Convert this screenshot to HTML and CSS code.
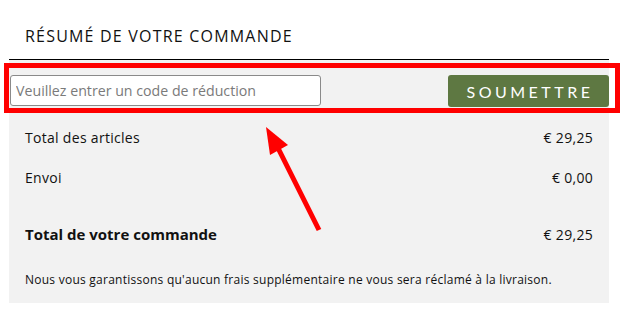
FILE: index.html
```html
<!DOCTYPE html>
<html lang="fr">
<head>
  <meta charset="UTF-8" />
  <title>Résumé de votre commande</title>
  <link rel="stylesheet" href="styles.css">
</head>
<body>
  <div class="summary">
    <h2 class="summary-title">RÉSUMÉ DE VOTRE COMMANDE</h2>

    <div class="summary-body">
      <form class="coupon" onsubmit="return false">
        <input type="text" class="coupon-input" placeholder="Veuillez entrer un code de réduction">
        <button type="submit" class="coupon-btn">SOUMETTRE</button>
      </form>

      <div class="row"><span>Total des articles</span><span>€ 29,25</span></div>
      <div class="row"><span>Envoi</span><span>€ 0,00</span></div>
      <div class="row total"><span>Total de votre commande</span><span class="amount">€ 29,25</span></div>

      <p class="note">Nous vous garantissons qu'aucun frais supplémentaire ne vous sera réclamé à la livraison.</p>
    </div>
  </div>

  <!-- annotation -->
  <div class="highlight"></div>
  <svg class="arrow" width="637" height="313" viewBox="0 0 637 313">
    <line x1="319" y1="230" x2="278" y2="148" stroke="#ff0000" stroke-width="5" />
    <polygon points="266,127 288,145 270,155" fill="#ff0000" />
  </svg>
</body>
</html>
```

FILE: styles.css
```css
* { margin: 0; padding: 0; box-sizing: border-box; }

body {
  background: #fff;
  font-family: "Open Sans", "Lato", sans-serif;
  color: #111;
  position: relative;
  width: 637px;
  height: 313px;
  overflow: hidden;
}

.summary {
  margin-left: 9px;
  width: 600px;
}

.summary-title {
  height: 60px;
  padding: 25px 0 0 16px;
  font-size: 16px;
  font-weight: 400;
  letter-spacing: 1.2px;
  border-bottom: 1px solid #000;
}

.summary-body {
  background: #f2f2f2;
  height: 243px;
  padding: 15px 0 0 0;
}

.coupon {
  display: flex;
  justify-content: space-between;
  padding-left: 1px;
  margin-bottom: 10px;
}

.coupon-input {
  width: 311px;
  height: 31px;
  border: 1px solid #8a8a8a;
  border-radius: 3px;
  background: #fff;
  padding: 0 5px;
  font-family: inherit;
  font-size: 14.2px;
}

.coupon-input::placeholder { color: #7a7a7a; }

.coupon-btn {
  width: 161px;
  height: 32px;
  background: #5e7842;
  color: #fff;
  border: none;
  border-radius: 3px;
  font-family: "Lato", sans-serif;
  font-size: 16px;
  letter-spacing: 3.5px;
  padding-left: 3px;
  cursor: pointer;
}

.row {
  display: flex;
  justify-content: space-between;
  align-items: center;
  height: 40px;
  padding: 0 16px;
  font-size: 14px;
  letter-spacing: 0.3px;
}

.row.total {
  margin-top: 17px;
  font-size: 15px;
  font-weight: 700;
  letter-spacing: 0;
}

.row.total .amount { font-weight: 400; font-size: 14px; letter-spacing: 0.3px; }

.note {
  padding: 17px 0 0 16px;
  font-size: 12px;
  letter-spacing: 0.25px;
}

.highlight {
  position: absolute;
  left: 4px;
  top: 63px;
  width: 616px;
  height: 50px;
  border: 5px solid #ff0000;
}

.arrow {
  position: absolute;
  left: 0;
  top: 0;
}
```
